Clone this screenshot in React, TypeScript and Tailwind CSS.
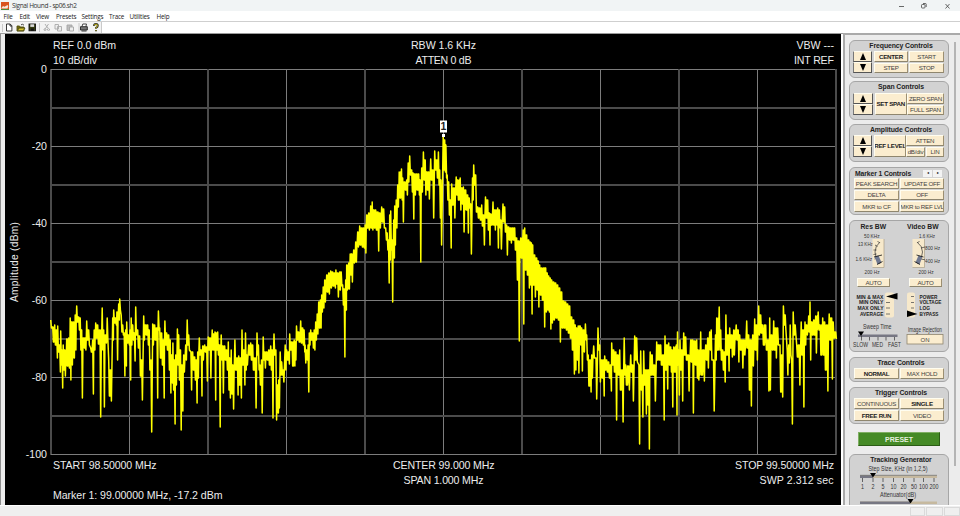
import type { ReactNode } from "react";
import clsx from "clsx";

// Sweep data: [x, max, min] in plot pixels
const SWEEP: number[][] = [
  [51, 320, 328], [53, 327, 342], [55, 325, 345], [57, 330, 358], [58, 326, 352], [60, 345, 372], [61, 331, 365], [62.3, 350, 388],
  [63.5, 345, 370], [65, 350, 376], [67, 339, 366], [69, 338, 368], [70.5, 318, 380], [72, 322, 365], [74, 322, 358], [75.5, 315, 350],
  [77, 306, 322], [79, 317, 330], [80.5, 318, 350], [82, 330, 398], [84, 338, 348], [85.5, 338, 350], [87, 321, 340], [89, 330, 345],
  [91, 348, 352], [93, 340, 394], [94.5, 330, 350], [96, 323, 338], [98, 325, 344], [100.3, 330, 417], [102.5, 308, 350], [104, 330, 407],
  [106, 335, 343], [107.5, 318, 340], [109, 360, 396], [111, 370, 401], [113, 318, 340], [114, 310, 323], [116, 318, 325], [117.2, 312, 360],
  [119, 304, 320], [120, 299, 310], [121.5, 315, 332], [123, 325, 335], [124.5, 333, 376], [126, 330, 366], [127, 322, 343], [129, 335, 345],
  [130.3, 330, 380], [131.5, 318, 345], [133, 325, 340], [134.7, 333, 361], [136, 307, 335], [138, 330, 348], [140, 336, 376], [142, 360, 400],
  [144, 316, 340], [146, 325, 335], [148, 325, 345], [149.5, 330, 370], [151.3, 360, 432], [153, 324, 345], [155, 325, 340], [157.3, 328, 398],
  [158.7, 311, 330], [160, 328, 358], [162, 333, 365], [163.8, 340, 398], [165.2, 321, 345], [167, 333, 350], [169, 335, 370], [170.5, 340, 393],
  [172, 355, 383], [173.2, 343, 390], [174.7, 360, 424], [176, 355, 385], [177.7, 329, 365], [179, 335, 380], [180.8, 350, 430], [182.5, 365, 411],
  [184, 355, 372], [186, 345, 360], [187.5, 320, 345], [189, 335, 350], [191.2, 352, 390], [193, 352, 370], [195, 357, 380], [196.7, 360, 403],
  [198, 352, 378], [199.6, 338, 355], [201.6, 350, 396], [203, 346, 360], [205, 345, 352], [207, 347, 381], [208.5, 337, 350], [210.5, 338, 378],
  [212.5, 330, 350], [214, 334, 350], [215.3, 332, 400], [216.6, 333, 350], [218, 332, 355], [219.8, 345, 427], [221.5, 335, 360], [223, 346, 393],
  [225, 346, 360], [227, 350, 370], [228.6, 342, 390], [230, 358, 398], [231.5, 350, 394], [233.2, 365, 409], [235.2, 340, 370], [237.7, 358, 395], [239, 356, 385],
  [241, 358, 398], [242.3, 330, 365], [244.5, 350, 385], [245.8, 333, 370], [247, 355, 365], [249, 345, 355], [251, 343, 360], [253, 345, 370],
  [255.7, 358, 408], [257.3, 333, 355], [258.7, 345, 370], [260, 365, 385], [261.8, 360, 413], [263.5, 337, 360], [265, 352, 368], [267, 352, 360],
  [269, 350, 365], [271, 346, 370], [272.6, 350, 418], [274.3, 334, 355], [276.2, 350, 420], [278, 385, 413], [279, 380, 408], [280.5, 352, 375],
  [282, 362, 375], [283.5, 370, 382], [285.5, 345, 370], [287, 350, 360], [289, 352, 364], [290, 334, 350], [292.3, 342, 366], [294.5, 340, 366],
  [295.5, 342, 360], [296.8, 326, 340], [298.8, 332, 342], [301, 321, 343], [303, 328, 345], [304.4, 330, 352], [305.4, 345, 363], [307, 350, 360],
  [308.4, 345, 392], [309.6, 333, 345], [311, 330, 340], [313, 333, 348], [314.5, 330, 350], [316, 322, 340], [317.5, 314, 334], [319, 302, 328],
  [320.7, 300, 328], [322, 295, 312], [323.5, 287, 308], [325, 280, 302], [327, 275, 292], [329, 273, 294], [331, 271, 288], [333, 272, 286],
  [335, 273, 288], [336.2, 270, 284], [338, 273, 297], [340, 272, 290], [341.5, 272, 286], [343, 285, 305], [344.5, 289, 357], [346, 280, 310],
  [347, 265, 290], [349, 263, 289], [350.5, 254, 275], [352, 254, 282], [354, 250, 263], [356, 242, 262], [358, 232, 247], [360, 226, 245],
  [362, 228, 247], [364, 228, 248], [365.5, 225, 253], [367, 215, 228], [369, 213, 230], [371, 206, 228], [372.5, 202, 230], [374, 210, 228],
  [376, 210, 230], [378.3, 212, 251], [380, 213, 228], [382, 207, 222], [384, 209, 228], [386, 228, 240], [387.5, 233, 250], [388.8, 240, 283],
  [390, 215, 260], [391, 211, 250], [392.3, 240, 302], [394, 220, 258], [395, 206, 245], [396.5, 200, 228], [398, 185, 207], [399.5, 172, 198],
  [401.8, 169, 200], [403, 178, 222], [405, 182, 190], [407, 180, 195], [408.5, 163, 182], [410, 156, 175], [412, 170, 192], [413.4, 173, 219],
  [415, 174, 195], [417, 174, 190], [419, 174, 195], [420.4, 180, 262], [422, 168, 192], [423.7, 152, 180], [425.5, 160, 195], [427, 172, 190],
  [429, 172, 199], [431, 159, 180], [433.3, 170, 218], [435, 151, 170], [437, 160, 178], [438.7, 152, 185], [440, 170, 218], [441.2, 180, 245],
  [443.5, 136, 170], [445, 140, 172], [446.2, 145, 178], [447.5, 175, 200], [449, 182, 215], [450.8, 200, 248], [452, 184, 205], [454.5, 188, 218],
  [456.5, 177, 195], [458, 180, 200], [460.5, 178, 210], [462, 188, 204], [463.7, 187, 232], [466, 190, 210], [468, 195, 233], [469.5, 198, 208],
  [471, 204, 254], [472.8, 178, 200], [474, 165, 185], [476, 175, 212], [478, 207, 218], [480, 208, 220], [482, 205, 226], [484, 215, 245],
  [485.8, 197, 218], [488, 200, 230], [489.6, 213, 245], [491, 214, 225], [493.3, 202, 225], [495, 210, 230], [496.5, 210, 225], [498, 208, 248],
  [499.7, 210, 228], [501, 220, 249], [503.3, 204, 222], [505, 207, 232], [507, 225, 255], [509, 227, 240], [511, 228, 243], [513, 228, 240],
  [515, 228, 250], [517, 238, 280], [518.9, 241, 341], [521, 238, 258], [523.4, 230, 324], [525, 228, 270], [527, 235, 275], [529, 240, 288],
  [530.5, 242, 285], [531.7, 243, 314], [533, 245, 285], [535, 255, 297], [537, 258, 290], [538.5, 261, 307], [540, 265, 295], [542, 268, 300], [544.3, 268, 327],
  [546, 268, 312], [547.5, 273, 310], [549, 276, 312], [550.5, 278, 329], [552, 280, 323], [554, 282, 320], [556, 283, 318], [558, 285, 320],
  [560, 288, 342], [562, 292, 328], [564, 301, 328], [566, 302, 330], [568, 304, 333], [570, 306, 338], [572, 317, 350], [574, 320, 374],
  [575.5, 325, 370], [577, 328, 360], [578.5, 326, 373], [580.5, 326, 345], [582, 328, 371], [584, 330, 352], [585.7, 324, 340], [587, 335, 360],
  [588.5, 355, 386], [590.7, 360, 392], [592, 355, 378], [594, 346, 358], [596.3, 358, 399], [598.3, 328, 350], [600, 345, 382], [602, 360, 378],
  [603.8, 360, 396], [605, 356, 370], [607, 360, 372], [609, 362, 378], [611, 365, 391], [612, 343, 365], [614, 350, 372], [616.2, 352, 420],
  [618, 355, 375], [620, 350, 390], [622.7, 370, 422], [624.5, 338, 375], [626, 365, 385], [629, 366, 390], [631, 355, 372], [633, 365, 401],
  [635, 336, 360], [637, 338, 362], [639.2, 365, 444], [641, 351, 390], [642.5, 375, 417], [644, 351, 385], [646, 370, 414], [647.5, 370, 405], [649, 370, 449],
  [650.5, 352, 375], [652.5, 355, 375], [655, 365, 401], [657, 342, 360], [659, 345, 360], [661, 345, 365], [663.8, 355, 420], [665.3, 336, 370],
  [667.3, 345, 389], [669, 343, 365], [671, 347, 372], [672.4, 350, 407], [674, 347, 372], [676.6, 345, 415], [677.8, 332, 365], [679, 350, 395],
  [680.3, 340, 370], [682.3, 350, 401], [684, 333, 355], [686, 337, 360], [688.7, 355, 391], [691, 340, 362], [693, 340, 413], [695, 341, 365],
  [697, 340, 378], [698.5, 350, 380], [701, 332, 375], [704, 350, 381], [706, 345, 360], [708, 338, 368], [710, 332, 350], [711.5, 330, 360],
  [713.8, 360, 411], [715.8, 335, 360], [717, 318, 350], [719.5, 307, 350], [721, 330, 360], [723, 350, 370], [724.8, 352, 382], [726.2, 315, 355],
  [728.7, 335, 371], [730, 328, 348], [732, 335, 357], [734, 330, 355], [736.5, 325, 340], [738.5, 330, 362], [740, 335, 350], [742.5, 340, 368],
  [744.5, 340, 355], [747, 321, 348], [749, 335, 390], [751, 340, 406], [753, 335, 366], [755, 319, 350], [757, 325, 360], [759, 306, 335],
  [761, 315, 333], [763, 325, 345], [766, 325, 350], [768.5, 340, 391], [770, 318, 390], [772, 335, 350], [774, 321, 350], [776, 328, 358],
  [778, 328, 345], [780.3, 345, 392], [782.3, 355, 397], [783.7, 306, 325], [785.5, 315, 330], [787.5, 350, 375], [789, 345, 363], [790.5, 325, 355],
  [792, 360, 424], [793.5, 312, 335], [795.5, 325, 335], [797, 345, 357], [799.5, 345, 385], [801.5, 322, 355], [803.5, 330, 407], [805.3, 322, 345],
  [807, 325, 335], [809, 316, 332], [810.3, 302, 360], [812, 322, 335], [814, 320, 335], [816, 316, 353], [818.5, 312, 330], [820.5, 325, 355],
  [823, 318, 355], [825, 322, 370], [827.5, 325, 391], [829.5, 314, 340], [832, 318, 379], [833.5, 322, 338], [836, 332, 339],
];

const tracePath = SWEEP.map(([x, hi, lo], i) => {
  const seg = `${i ? "L" : "M"}${x - 0.3} ${hi}L${x + 0.4} ${lo}`;
  const next = SWEEP[i + 1];
  if (!next) return seg;
  // fill in the gap to the next bin where the two ranges overlap
  const top = Math.max(hi, next[1]);
  const bottom = Math.min(lo, next[2]);
  const mid = (x + next[0]) / 2;
  return bottom > top ? `${seg}L${mid} ${top}V${bottom}` : seg;
}).join("");

const MENU = [
  ["File", "w-[16px]"],
  ["Edit", "w-[16.5px]"],
  ["View", "w-[20px]"],
  ["Presets", "w-[25.5px]"],
  ["Settings", "w-[27.5px]"],
  ["Trace", "w-[20.5px]"],
  ["Utilities", "w-[27px]"],
  ["Help", "w-[20px]"],
];

const TitleBar = () => (
  <div className="flex h-[11px] items-center justify-between bg-[#f1f4f5] pl-px pr-[9px]">
    <div className="flex items-center gap-[3px]">
      <svg width="8" height="8" viewBox="0 0 8 8">
        <rect width="8" height="8" fill="#d9531e" />
        <path d="M0 6.500L2 4l1.500 .8L6.500 3l.8 1-.8 2.500z" fill="#f3e9dc" />
        <path d="M0 7h8v1H0z" fill="#4d8a3a" />
      </svg>
      <span className="text-[6.5px] leading-[11px] tracking-[-0.36px] text-[#333]">Signal Hound - sp06.sh2</span>
    </div>
    <svg width="54" height="10" viewBox="0 0 54 10" fill="none" stroke="#444" strokeWidth="0.8">
      <path d="M2 5.500h5" />
      <rect x="24.500" y="3.500" width="3.500" height="3.500" rx="0.800" />
      <path d="M26 2.500h2.500q.7 0 .7.7V6M48.500 3l4 4.500M52.500 3l-4 4.500" />
    </svg>
  </div>
);

const Toolbar = () => (
  <div className="flex h-3 border-t border-[#cfcfcf] bg-white">
    <svg width="102" height="11" viewBox="0 0 102 11" fill="none" strokeWidth="0.9">
      <rect width="101.500" height="11" fill="#f3f3f3" />
      <path d="M2.500 2v8M39.500 1v9M79 1v9M101.500 0v11" stroke="#c4c4c4" />
      <path d="M6.500 2h3.700l1.700 1.800v5.200H6.500zM10 2v2h2" fill="#fff" stroke="#222" />
      <path d="M17 9V4h2.500l.8 1H24v4z" fill="#6d6a10" stroke="#55500e" />
      <path d="M17.300 8.800L19 6h6l-1.800 2.800z" fill="#d8c62f" stroke="#4a4710" />
      <path d="M21 2.800q1.500-1.200 3 .4" stroke="#333" />
      <rect x="29" y="2" width="6.500" height="6.800" fill="#333a10" stroke="#111" />
      <rect x="30.300" y="2.300" width="3.800" height="2.600" fill="#dcdcdc" />
      <rect x="30.800" y="6.500" width="3" height="2.300" fill="#111" />
      <path d="M45 2l3 4.500M48.500 2l-3 4.500M45 8.500a1 1 0 1 1 .1 0M48.500 8.500a1 1 0 1 1 .1 0" stroke="#a9a9a9" />
      <path d="M55 2.500h3.500v4.500H55zM57.500 4.500h4v4.500h-4z" fill="#eee" stroke="#a9a9a9" />
      <path d="M67 3h5v5.500h-5z" fill="#bdbdbd" stroke="#a5a5a5" />
      <path d="M69.500 5h4v4h-4z" fill="#eee" stroke="#a5a5a5" />
      <path d="M82 4.500l.8-2.500h3.700l-.6 2.500" fill="#fff" stroke="#333" />
      <path d="M80.500 4.700h6.800v3.300h-6.800z" fill="#777" stroke="#222" />
      <path d="M81.500 9h5" stroke="#222" />
      <path d="M94 4q0-2 1.900-2t1.900 1.800q0 1.200-1.800 2v1M96 8v1.300" stroke="#222" strokeWidth="1.900" />
      <path d="M94.200 3.700q0-1.500 1.700-1.500t1.700 1.500q0 1-1.700 1.900v1M96 8.200v.9" stroke="#d6ca1a" strokeWidth="0.900" />
    </svg>
  </div>
);

const Plot = () => (
  <div className="w-[836px] bg-black">
    <svg width="836" height="471" viewBox="5 34 836 471" fill="none">
      {[0, 1, 2, 3, 4, 5, 6, 7, 8, 9, 10].map((i) => {
        const thinX = i % 2 === 1;
        const thinY = i % 2 === 0;
        const x = Math.floor(51 + i * 78.5) - (thinX ? 0 : 1);
        const y = Math.floor(69 + i * 38.5);
        return (
          <g key={i}>
            <rect x={x} y="69" width={thinX ? 1 : 2} height="386" fill={thinX ? "#7c7c7c" : "#4b4b4b"} />
            <rect x="51" y={y} width="785" height={thinY ? 1 : 2} fill={thinY ? "#7c7c7c" : "#4b4b4b"} />
          </g>
        );
      })}
      <path d={tracePath} stroke="#ffff00" strokeWidth="1.5" strokeLinejoin="round" />
      <rect x="440" y="120.500" width="7" height="12" fill="#fff" />
      <rect x="442" y="134" width="3" height="3" fill="#fff" />
      <g fill="#ececec" className="font-['Liberation_Sans',sans-serif] text-[10.6px]">
        <text x="443.500" y="130.300" textAnchor="middle" fill="#222" className="text-[10.5px] font-bold">1</text>
        <text x="53" y="49" textLength="63">REF 0.0 dBm</text>
        <text x="53" y="64" textLength="44">10 dB/div</text>
        <text x="411" y="49" textLength="65">RBW 1.6 KHz</text>
        <text x="415.500" y="64" textLength="56">ATTEN 0 dB</text>
        <text x="796.500" y="49" textLength="37.500">VBW ---</text>
        <text x="794" y="64" textLength="40">INT REF</text>
        <text x="53" y="469" textLength="103.500">START 98.50000 MHz</text>
        <text x="393" y="469" textLength="101.500">CENTER 99.000 MHz</text>
        <text x="403.500" y="484" textLength="80">SPAN 1.000 MHz</text>
        <text x="735" y="469" textLength="99">STOP 99.50000 MHz</text>
        <text x="759.500" y="484" textLength="74">SWP 2.312 sec</text>
        <text x="53" y="499" textLength="169.500">Marker 1: 99.00000 MHz, -17.2 dBm</text>
        <text transform="translate(18 302) rotate(-90)" textLength="80" className="text-[10.2px]">Amplitude (dBm)</text>
        {[0, -20, -40, -60, -80, -100].map((v, i) => (
          <text key={v} x="47" y={73 + i * 77} textAnchor="end">{v}</text>
        ))}
      </g>
    </svg>
  </div>
);

const Panel = ({ title, className, children }: { title?: string; className: string; children: ReactNode }) => (
  <section className={clsx("shrink-0 rounded-[6px] border border-[#a6a6a6] bg-[#d2d2d2] px-1", className)}>
    {title && (
      <h2 className="h-[10px] whitespace-nowrap pl-1 text-center text-[6.9px] leading-[10px] font-bold tracking-[-0.1px] text-[#222]">{title}</h2>
    )}
    {children}
  </section>
);

const Btn = ({ children, className, bold }: { children: ReactNode; className?: string; bold?: boolean }) => (
  <button
    className={clsx(
      "flex items-center justify-center overflow-hidden whitespace-nowrap border border-t-[#fffdf0] border-l-[#fffdf0] border-r-[#9c8f72] border-b-[#8f866e] bg-[#fbedcf] pt-px text-[6.2px] leading-none tracking-[-0.25px]",
      bold ? "font-bold text-[#222]" : "text-[#444]",
      className
    )}
  >
    {children}
  </button>
);

const Arrows = () => (
  <div className="-ml-px flex w-[20px] flex-col">
    {["M0 8L3.500 0L7 8z", "M0 0h7L3.500 8z"].map((d) => (
      <div key={d} className="flex h-[11px] items-center justify-center border border-t-[#fffdf0] border-l-[#777] border-r-[#555] border-b-[#555] bg-[#fbedcf]">
        <svg width="6" height="7" viewBox="0 0 7 8"><path d={d} fill="#000" /></svg>
      </div>
    ))}
  </div>
);

// Scale label squeezed to a fixed width
const Label = ({ x, y, w, children }: { x: number; y: number; w: number; children: string }) => (
  <text x={x} y={y} textLength={w} lengthAdjust="spacingAndGlyphs">{children}</text>
);

const BandwidthDials = () => (
  <svg width="98" height="52" viewBox="850 230 98 52" className="-ml-1" fill="none">
    <g fill="#333" className="text-[6px]">
      <Label x={864} y={238} w={15.5}>50 KHz</Label>
      <Label x={858} y={246} w={15}>13 KHz</Label>
      <Label x={855.5} y={261.3} w={16.5}>1.6 KHz</Label>
      <Label x={864.5} y={274} w={15}>200 Hz</Label>
      <Label x={919} y={238} w={16}>1.6 KHz</Label>
      <Label x={918.5} y={274} w={15}>200 Hz</Label>
    </g>
    <rect x="872.500" y="239" width="11.500" height="28.500" fill="#f7e9cb" />
    <path d="M884 239v28.500h-11.500" stroke="#a99f88" strokeWidth="0.7" />
    <path d="M880 242q-5 4-5 10t5 12M877.500 241l2 2M875 245l2.500 1.500M873.500 250h3M873.500 254.500l3-.5M874.500 259l3-1M877 263l2-1.500" stroke="#333" strokeWidth="0.7" />
    <path d="M874.500 256.500l4-1 3 7-4 2z" fill="#6f7890" />
    <path d="M874 257l8-2M877 264.500l5.500-3" stroke="#111" strokeWidth="0.8" />
    <rect x="912.500" y="239" width="12" height="28.500" fill="#f7e9cb" />
    <path d="M924.500 239v28.500h-12" stroke="#a99f88" strokeWidth="0.7" />
    <path d="M917 242q5.500 4 5.500 10t-5 12M919.500 241l-2 2M921 248l4-1M921 259l4 .8" stroke="#333" strokeWidth="0.7" />
    <path d="M922.500 256.500l-4-1-3 7 4 2z" fill="#6f7890" />
    <path d="M923.500 257l-7-2M920 264.500l-5.500-3" stroke="#111" strokeWidth="0.8" />
    <g fill="#333" className="text-[6px]">
      <Label x={925} y={249.5} w={15}>800 Hz</Label>
      <Label x={925} y={262.5} w={15}>400 Hz</Label>
    </g>
  </svg>
);

const DetectorSliders = () => (
  <svg width="98" height="62" viewBox="850 289 98 62" className="-ml-1" fill="none">
    <rect x="885" y="293.500" width="9" height="25" rx="2" fill="#f7e9cb" />
    <rect x="907" y="293.500" width="8" height="25" rx="2" fill="#f7e9cb" />
    <path d="M886 303.500h4M886 309h4M886 315h4M911 297.500h3M911 303.500h3M911 309h3" stroke="#555" strokeWidth="0.8" />
    <path d="M886 297.500l11.500-3.500v6.500zM917.500 315l-10.500-3.500v6.500z" fill="#000" />
    <g fill="#222" className="text-[5.8px] font-bold">
      <Label x={856.5} y={299.5} w={27}>MIN & MAX</Label>
      <Label x={859} y={305.2} w={24.5}>MIN ONLY</Label>
      <Label x={857.5} y={311} w={26}>MAX ONLY</Label>
      <Label x={860} y={316.8} w={23.5}>AVERAGE</Label>
      <Label x={919.5} y={299.5} w={18}>POWER</Label>
      <Label x={919.5} y={305.2} w={22}>VOLTAGE</Label>
      <Label x={919.5} y={311} w={10.5}>LOG</Label>
      <Label x={919.5} y={316.8} w={19}>BYPASS</Label>
    </g>
    <rect x="858" y="335.500" width="39.500" height="2.500" fill="#777783" />
    <path d="M861.500 337v4.500M869.500 338v3.500M878 338v3.500M886 338v3.500M894.500 338v3.500" stroke="#333" strokeWidth="0.7" />
    <path d="M858 332.500h6l-3 4.500z" fill="#000" />
    <g fill="#333" className="text-[6.5px]">
      <Label x={863} y={330.2} w={28.5}>Sweep Time</Label>
      <Label x={853} y={348} w={15}>SLOW</Label>
      <Label x={872} y={348} w={11}>MED</Label>
      <Label x={888} y={348} w={13}>FAST</Label>
      <Label x={908} y={332.5} w={34}>Image Rejection</Label>
    </g>
    <rect x="907" y="335.500" width="36" height="9.500" fill="#fbedcf" stroke="#8f866e" strokeWidth="0.8" />
    <text x="925" y="342.500" textAnchor="middle" fill="#444" className="text-[6px]">ON</text>
  </svg>
);

const STEP_LABELS = ["1", "2", "5", "10", "20", "50", "100", "200"];
const STEP_X = [862.5, 873, 883, 893.5, 903.5, 914, 923.5, 934];

const TrackingSliders = () => (
  <svg width="98" height="40" viewBox="850 465 98 40" className="-ml-1" fill="none">
    <rect x="860" y="476.500" width="77" height="2.500" fill="#c6b99f" />
    <rect x="860" y="476.500" width="13" height="2.500" fill="#777783" />
    <path d="M860 476.300h77" stroke="#555" strokeWidth="0.600" />
    <path d="M870 474h6l-3 4.500z" fill="#000" />
    <g fill="#333" className="text-[6.4px]">
      <Label x={868.5} y={471.5} w={59}>Step Size, KHz (in 1,2,5)</Label>
      <Label x={880} y={498} w={36}>Attenuator(dB)</Label>
      {STEP_LABELS.map((label, i) => (
        <g key={label}>
          <Label x={STEP_X[i] - label.length * 1.5} y={490} w={label.length * 3}>{label}</Label>
          <path d={`M${STEP_X[i]} 479v4`} stroke="#333" strokeWidth="0.7" />
        </g>
      ))}
    </g>
    <rect x="860" y="502.500" width="77" height="2.500" fill="#c6b99f" />
    <rect x="860" y="502.500" width="50" height="2.500" fill="#777783" />
    <path d="M907.500 500h6l-3 4.500z" fill="#000" />
  </svg>
);

const SidePanel = () => (
  <aside className="flex flex-1 justify-between overflow-hidden border-l-2 border-t-2 border-[#aaa] bg-[#ececec] pl-1 pr-1">
    <div className="flex w-[100px] flex-col pt-[5px]">
      <Panel title="Frequency Controls" className="h-[38px]">
        <div className="flex gap-[2px]">
          <Arrows />
          <div className="grid h-[22px] grid-cols-[34px_35px] grid-rows-2 gap-x-px gap-y-px">
            <Btn bold>CENTER</Btn>
            <Btn>START</Btn>
            <Btn>STEP</Btn>
            <Btn>STOP</Btn>
          </div>
        </div>
      </Panel>
      <Panel title="Span Controls" className="mt-[3px] h-[39px]">
        <div className="flex pt-px">
          <Arrows />
          <Btn bold className="ml-[2px] h-[22px] w-[33px]">SET SPAN</Btn>
          <div className="grid h-[22px] w-[38px] grid-rows-2 gap-px">
            <Btn>ZERO SPAN</Btn>
            <Btn>FULL SPAN</Btn>
          </div>
        </div>
      </Panel>
      <Panel title="Amplitude Controls" className="mt-1 h-[38px]">
        <div className="flex">
          <Arrows />
          <Btn bold className="ml-[2px] h-[22px] w-[33px]">REF LEVEL</Btn>
          <div className="grid h-[22px] w-[38px] grid-cols-[19px_18px] grid-rows-2 gap-px">
            <Btn className="col-span-2">ATTEN</Btn>
            <Btn>dB/div</Btn>
            <Btn>LIN</Btn>
          </div>
        </div>
      </Panel>
      <Panel className="mt-[5px] h-[48px]">
        <div className="flex h-[10px] items-center justify-between pl-px pr-[2px]">
          <h2 className="text-[6.8px] leading-[11px] font-bold tracking-[-0.1px] text-[#222]">Marker 1 Controls</h2>
          <div className="flex gap-px">
            <span className="flex h-[7px] w-[9px] items-center justify-center bg-[#f3f3f3] text-[4px] leading-none">◂</span>
            <span className="flex h-[7px] w-[9px] items-center justify-center bg-[#f3f3f3] text-[4px] leading-none">▸</span>
          </div>
        </div>
        <div className="grid h-[34px] grid-cols-[45px_44px] grid-rows-3 gap-x-px gap-y-px">
          <Btn>PEAK SEARCH</Btn>
          <Btn>UPDATE OFF</Btn>
          <Btn>DELTA</Btn>
          <Btn>OFF</Btn>
          <Btn>MKR to CF</Btn>
          <Btn className="tracking-[-0.4px]">MKR to REF LVL</Btn>
        </div>
      </Panel>
      <Panel className="mt-[5px] h-[132px]">
        <div className="flex h-[9px] text-[6.8px] leading-[11px] font-bold text-[#222]">
          <h2 className="w-[40px] text-center">Res BW</h2>
          <h2 className="ml-[9px] w-[44px] text-center">Video BW</h2>
        </div>
        <div className="h-[48px] overflow-hidden">
          <BandwidthDials />
        </div>
        <div className="flex gap-[19px] pl-[3px]">
          <Btn className="h-[9px] w-[33px]">AUTO</Btn>
          <Btn className="h-[9px] w-[33px]">AUTO</Btn>
        </div>
        <div className="mt-px">
          <DetectorSliders />
        </div>
      </Panel>
      <Panel title="Trace Controls" className="mt-[5px] h-[25px]">
        <div className="grid h-[11px] grid-cols-[45px_44px] gap-x-px">
          <Btn bold>NORMAL</Btn>
          <Btn>MAX HOLD</Btn>
        </div>
      </Panel>
      <Panel title="Trigger Controls" className="mt-[5px] h-[37px]">
        <div className="grid h-[23px] grid-cols-[45px_44px] grid-rows-2 gap-x-px gap-y-px">
          <Btn>CONTINUOUS</Btn>
          <Btn bold>SINGLE</Btn>
          <Btn bold>FREE RUN</Btn>
          <Btn>VIDEO</Btn>
        </div>
      </Panel>
      <button className="mt-2 ml-[9px] h-[14px] w-[82px] shrink-0 border border-t-[#7fae63] border-l-[#7fae63] border-r-[#2b5c15] border-b-[#2b5c15] bg-[#458a26] text-[7px] leading-none font-bold text-[#e6f0df]">
        PRESET
      </button>
      <Panel title="Tracking Generator" className="mt-2 h-[60px]">
        <div className="-mt-px">
          <TrackingSliders />
        </div>
      </Panel>
    </div>
    <div className="mt-[7px] h-[424px] w-[2px] bg-[#b4b4b4]" />
  </aside>
);

const App = () => (
  <div className="flex h-[516px] w-[960px] flex-col overflow-hidden bg-[#f0f0f0] font-['Liberation_Sans',Arial,sans-serif]">
    <div className="font-['Open_Sans','Noto_Sans',sans-serif]">
      <TitleBar />
      <nav className="flex h-[10px] bg-white pl-[3.5px] text-[6.3px] leading-[11px] tracking-[-0.2px] text-[#222]">
        {MENU.map(([label, width]) => (
          <span key={label} className={width}>{label}</span>
        ))}
      </nav>
    </div>
    <Toolbar />
    <main className="flex h-[472px] shrink-0">
      <div className="flex border-t border-[#9a9a9a]">
        <div className="w-[5px] border-l border-[#8f8f8f] bg-[#ededed]" />
        <Plot />
        <div className="w-[2px] bg-white" />
      </div>
      <SidePanel />
    </main>
    <footer className="flex h-[11px] justify-end gap-px border-t border-white bg-[#efefef] pt-px">
      <div className="h-[9px] w-[15px] border border-[#dadada]" />
      <div className="h-[9px] w-[17px] border border-[#dadada]" />
      <div className="h-[9px] w-[16px] border border-[#dadada]" />
    </footer>
  </div>
);

export default App;
